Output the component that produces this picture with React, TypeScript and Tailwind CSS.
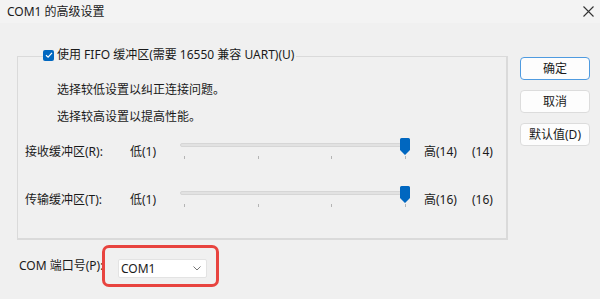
import React from "react";

const font = { fontFamily: '"Noto Sans", "Noto Sans CJK SC", sans-serif' };

function Slider() {
  const ticks = [4, 78, 151, 225];
  return (
    <div className="relative w-[229px] h-[22px] shrink-0">
      <div className="absolute left-0 right-0 top-[5px] h-[4px] rounded-sm bg-[#e2e2e2] border border-[#d6d6d6]" />
      {ticks.map((t) => (
        <div
          key={t}
          className="absolute top-[18px] w-px h-[3px] bg-[#b4b4b4]"
          style={{ left: t }}
        />
      ))}
      <svg
        className="absolute top-0 left-[220px]"
        width="10"
        height="17"
        viewBox="0 0 10 17"
      >
        <path
          d="M1.5 0 H8.5 A1.5 1.5 0 0 1 10 1.5 V12 L5 17 L0 12 V1.5 A1.5 1.5 0 0 1 1.5 0 Z"
          fill="#0067c0"
        />
      </svg>
    </div>
  );
}

function BufferRow({ label, high }: { label: string; high: number }) {
  return (
    <div className="flex items-start h-[22px] text-[12px] leading-[16px] text-[#1a1a1a]">
      <span className="w-[112px] shrink-0 pl-[7px] pt-[6px] whitespace-nowrap">{label}</span>
      <span className="w-[50px] shrink-0 pt-[6px]">低(1)</span>
      <Slider />
      <span className="w-[48px] shrink-0 ml-[15px] pt-[6px]">高({high})</span>
      <span className="pt-[6px]">({high})</span>
    </div>
  );
}

function DialogButton({ children, primary }: { children: React.ReactNode; primary?: boolean }) {
  return (
    <button
      className={
        primary
          ? "w-[70px] h-[23px] rounded-[4px] bg-[#fdfdfd] border border-[#4f9be0] text-[12px] text-[#1a1a1a]"
          : "w-[70px] h-[23px] rounded-[4px] bg-[#fdfdfd] border border-[#dcdcdc] text-[12px] text-[#1a1a1a]"
      }
    >
      {children}
    </button>
  );
}

export default function App() {
  return (
    <div className="w-[600px] h-[299px] bg-[#f0f0f0] overflow-hidden" style={font}>
      {/* Title bar */}
      <div className="h-[23px] bg-[#f3f3f3] flex items-center justify-between pl-[7px] pr-[6px]">
        <span className="text-[12px] text-[#1a1a1a]">COM1 的高级设置</span>
        <svg width="11" height="11" viewBox="0 0 11 11">
          <path d="M0.5 0.5 L10.5 10.5 M10.5 0.5 L0.5 10.5" stroke="#333" strokeWidth="1.1" />
        </svg>
      </div>

      <div className="flex">
        {/* Left side */}
        <div className="flex flex-col">
          <div className="relative ml-[17px] mt-[33px] w-[491px] h-[184px] border border-[#dadada] border-r-2 border-b-2">
            <div className="absolute -top-[10px] left-[25px] flex items-center gap-[3px] bg-[#f0f0f0] pr-[2px] text-[12px] leading-[16px] text-[#1a1a1a]">
              <span className="w-[11px] h-[11px] rounded-[2px] bg-[#0067c0] flex items-center justify-center">
                <svg width="8" height="8" viewBox="0 0 8 8">
                  <path d="M1 4.2 L3.1 6.2 L7 1.8" fill="none" stroke="#fff" strokeWidth="1.2" />
                </svg>
              </span>
              <span>使用 FIFO 缓冲区(需要 16550 兼容 UART)(U)</span>
            </div>
            <div className="flex flex-col pt-[25px] text-[12px] leading-[16px] text-[#1a1a1a]">
              <span className="pl-[39px]">选择较低设置以纠正连接问题。</span>
              <span className="pl-[39px] mt-[11px]">选择较高设置以提高性能。</span>
              <div className="mt-[13px]">
                <BufferRow label="接收缓冲区(R):" high={14} />
              </div>
              <div className="mt-[26px]">
                <BufferRow label="传输缓冲区(T):" high={16} />
              </div>
            </div>
          </div>

          <div className="flex items-center mt-[5px]">
            <span className="w-[102px] shrink-0 pl-[19px] text-[12px] text-[#1a1a1a] whitespace-nowrap">COM 端口号(P):</span>
            <div className="shrink-0 border-[3px] border-[#e8443f] rounded-[7px] w-[117px] h-[42px] pl-[13px] pt-[11px]">
              <div className="w-[89px] h-[19px] bg-white border border-[#e3e3e3] rounded-[2px] flex items-center justify-between pl-[2px] pr-[5px]">
                <span className="text-[12px] text-[#1a1a1a]">COM1</span>
                <svg width="8" height="5" viewBox="0 0 8 5">
                  <path d="M0.5 0.5 L4 4 L7.5 0.5" fill="none" stroke="#777" strokeWidth="1" />
                </svg>
              </div>
            </div>
          </div>
        </div>

        {/* Right buttons */}
        <div className="flex flex-col gap-[10px] ml-[12px] mt-[34px]">
          <DialogButton primary>确定</DialogButton>
          <DialogButton>取消</DialogButton>
          <DialogButton>默认值(D)</DialogButton>
        </div>
      </div>
    </div>
  );
}
